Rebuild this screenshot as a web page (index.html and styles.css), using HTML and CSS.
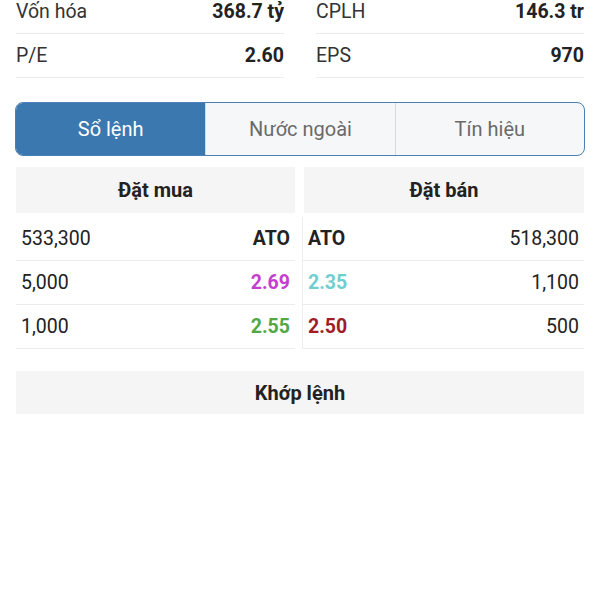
FILE: index.html
```html
<!DOCTYPE html>
<html lang="vi">
	<head>
		<meta charset="utf-8" />
		<title>Sổ lệnh</title>
		<link rel="stylesheet" href="styles.css">
	</head>
	<body>
		<div id="wrapper">
			<section class="stats">
				<div class="stat"><span>Vốn hóa</span><b>368.7 tỷ</b></div>
				<div class="stat"><span>CPLH</span><b>146.3 tr</b></div>
				<div class="stat"><span>P/E</span><b>2.60</b></div>
				<div class="stat"><span>EPS</span><b>970</b></div>
			</section>

			<nav class="tabs">
				<div class="tab active">Sổ lệnh</div>
				<div class="tab">Nước ngoài</div>
				<div class="tab">Tín hiệu</div>
			</nav>

			<section class="book">
				<div class="side buy">
					<div class="head">Đặt mua</div>
					<div class="row"><span>533,300</span><b>ATO</b></div>
					<div class="row"><span>5,000</span><b class="ceil">2.69</b></div>
					<div class="row"><span>1,000</span><b class="up">2.55</b></div>
				</div>
				<div class="side sell">
					<div class="head">Đặt bán</div>
					<div class="row"><b>ATO</b><span>518,300</span></div>
					<div class="row"><b class="floor">2.35</b><span>1,100</span></div>
					<div class="row"><b class="down">2.50</b><span>500</span></div>
				</div>
			</section>

			<div class="match">Khớp lệnh</div>
		</div>
	</body>
</html>
```

FILE: styles.css
```css
body{
	margin: 0;
	background-color: #ffffff;
	font-family: Roboto, "Noto Sans", sans-serif;
	color: #222222;
	font-size: 19.5px;
}

#wrapper{
	padding: 0 16px;
	margin-top: -10px;
}

.stats{
	display: grid;
	grid-template-columns: 1fr 1fr;
	column-gap: 32px;
}

.stat{
	display: flex;
	justify-content: space-between;
	align-items: center;
	height: 43px;
	border-bottom: 1px solid #ececec;
}

.stat span{
	color: #333333;
}

.stat b{
	font-weight: bold;
}

.tabs{
	display: grid;
	grid-template-columns: 1fr 1fr 1fr;
	margin: 24px -1px 0 -1px;
	height: 52px;
	border: 1px solid #4a80b3;
	border-radius: 8px;
	overflow: hidden;
	background-color: #f6f7f9;
}

.tab{
	display: flex;
	align-items: center;
	justify-content: center;
	color: #6a6a6a;
	font-size: 20px;
	border-left: 1px solid #d6d9dd;
}

.tab:first-child{
	border-left: none;
}

.tab.active{
	background-color: #3c78b0;
	color: #ffffff;
}

.book{
	display: grid;
	grid-template-columns: 279px 1fr;
	column-gap: 9px;
	margin-top: 11px;
}

.head{
	height: 46px;
	display: flex;
	align-items: center;
	justify-content: center;
	background-color: #f5f5f5;
	font-weight: bold;
	font-size: 20px;
	margin-bottom: 4px;
}

.row{
	display: flex;
	justify-content: space-between;
	align-items: center;
	height: 43px;
	padding: 0 5px;
	border-bottom: 1px solid #ececec;
}

.sell .row{
	border-left: 1px solid #eeeeee;
	margin-left: -2px;
}

.ceil{ color: #c53fcf; }
.up{ color: #52a844; }
.floor{ color: #6fcfd0; }
.down{ color: #a01d25; }

.match{
	margin-top: 22px;
	height: 43px;
	display: flex;
	align-items: center;
	justify-content: center;
	background-color: #f5f5f5;
	font-weight: bold;
	font-size: 20px;
}
```
